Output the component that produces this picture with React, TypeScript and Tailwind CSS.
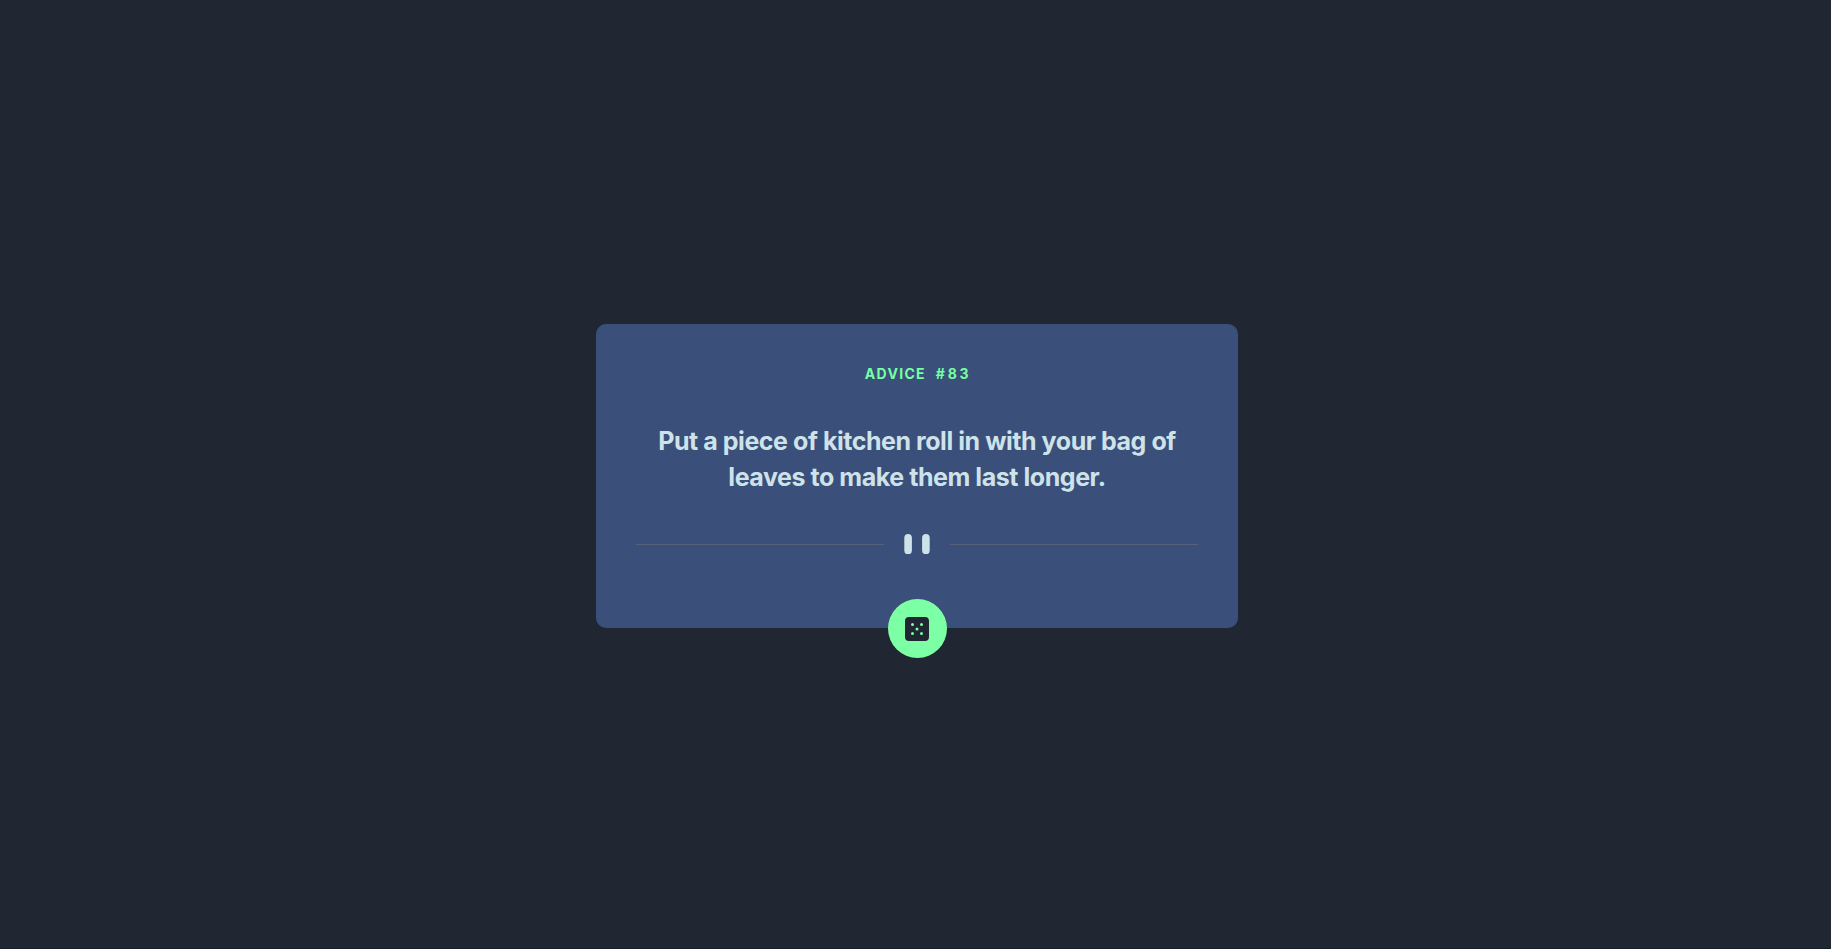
export default function App() {
  return (
    <main className="flex h-[949px] flex-col items-center border-b border-[#181c27] bg-[#202632] pl-[3px] pt-[324px] font-['Inter',sans-serif]">
      <section className="flex h-[304px] w-[642px] flex-col items-center rounded-[10px] bg-[#3a4f79] px-10 pt-[37px]">
        <h1 className="flex h-6 shrink-0 items-center gap-[10px] pl-[2px] text-[14px] font-bold text-[#75ffa3]">
          <span className="tracking-[1.3px]">ADVICE</span>
          <span className="tracking-[2.7px]">#83</span>
        </h1>
        <p className="mt-[38px] flex shrink-0 flex-col items-center whitespace-nowrap text-[25px] font-bold leading-9 text-[#cee3e9]">
          <span className="tracking-[-0.45px]">Put a piece of kitchen roll in with your bag of</span>
          <span className="tracking-[-0.45px]">leaves to make them last longer.</span>
        </p>
        <svg className="mt-[39px] h-[20.25px] w-[562px] shrink-0" viewBox="0 0 562 20.25" fill="none">
          <path fill="#56607a" d="M0 10h248v1H0zM314 10h248v1H314z" />
          <rect x="268.3" width="7.6" height="20.25" rx="3.8" fill="#CEE3E9" />
          <rect x="286.1" width="7.6" height="20.25" rx="3.8" fill="#CEE3E9" />
        </svg>
        <button aria-label="New advice" className="mt-[44.75px] flex size-[59px] shrink-0 items-center justify-center rounded-full bg-[#7dffa5]">
          <svg width="24" height="24" viewBox="0 0 24 24">
            <path fill="#202733" d="M20 0H4a4.005 4.005 0 0 0-4 4v16a4.005 4.005 0 0 0 4 4h16a4.005 4.005 0 0 0 4-4V4a4.005 4.005 0 0 0-4-4ZM7.5 18a1.5 1.5 0 1 1 0-3 1.5 1.5 0 0 1 0 3Zm0-9a1.5 1.5 0 1 1 0-3 1.5 1.5 0 0 1 0 3Zm4.5 4.5a1.5 1.5 0 1 1 0-3 1.5 1.5 0 0 1 0 3Zm4.5 4.5a1.5 1.5 0 1 1 0-3 1.5 1.5 0 0 1 0 3Zm0-9a1.5 1.5 0 1 1 0-3 1.5 1.5 0 0 1 0 3Z" />
          </svg>
        </button>
      </section>
    </main>
  );
}
